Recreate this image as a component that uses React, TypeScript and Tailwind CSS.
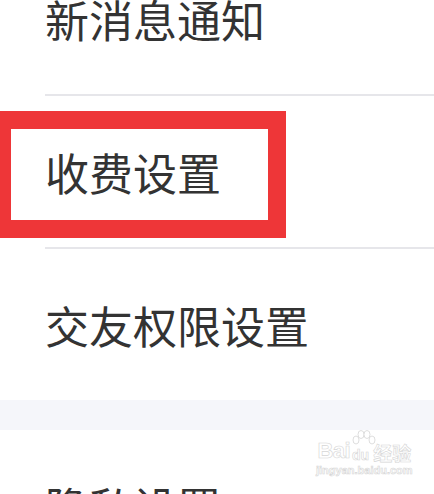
import React from 'react';

const rows = ['新消息通知', '收费设置', '交友权限设置'];

const Row: React.FC<{ label: string; divider?: boolean }> = ({ label, divider = true }) => (
  <div className="flex flex-col">
    <div className="h-[151px] flex items-center pl-[45px]">
      <span className="text-[44px] leading-none text-[#333333]">{label}</span>
    </div>
    {divider && <div className="ml-[45px] h-[2px] bg-[#e6e6ea]" />}
  </div>
);

export default function App() {
  return (
    <div className="relative w-[434px] h-[494px] overflow-hidden bg-white font-['Noto_Sans_CJK_SC',sans-serif]">
      <div className="-mt-[57px] flex flex-col">
        {rows.map((label, i) => (
          <Row key={label} label={label} divider={i < rows.length - 1} />
        ))}
        {/* section gap */}
        <div className="h-[30px] bg-[#f5f6fa]" />
        <Row label="隐私设置" divider={false} />
      </div>

      {/* red highlight annotation */}
      <div className="absolute left-[-7px] top-[111px] w-[293px] h-[127px] border-[18px] border-[#ee3638]" />

      {/* watermark */}
      <div className="absolute left-[316px] top-[440px] flex flex-col items-center text-white [-webkit-text-stroke:0.6px_#d6d6d6] font-['Liberation_Sans',sans-serif]">
        <div className="flex items-end gap-[2px] leading-none">
          <span className="text-[22px] font-bold tracking-tight">Bai</span>
          <span className="relative text-[14px] font-bold">
            <svg className="absolute left-[-1px] top-[-18px]" width="26" height="18" viewBox="0 0 26 18">
              <g fill="white" stroke="#d6d6d6" strokeWidth="0.8">
                <ellipse cx="5" cy="10" rx="3" ry="4" />
                <ellipse cx="10" cy="4.5" rx="3" ry="4" />
                <ellipse cx="16" cy="4.5" rx="3" ry="4" />
                <ellipse cx="21" cy="10" rx="3" ry="4" />
              </g>
            </svg>
            du
          </span>
          <span className="text-[19px] font-['Noto_Sans_CJK_SC',sans-serif] font-bold ml-[2px]">经验</span>
        </div>
        <span className="text-[11px] font-bold leading-none mt-[3px]">jingyan.baidu.com</span>
      </div>
    </div>
  );
}
